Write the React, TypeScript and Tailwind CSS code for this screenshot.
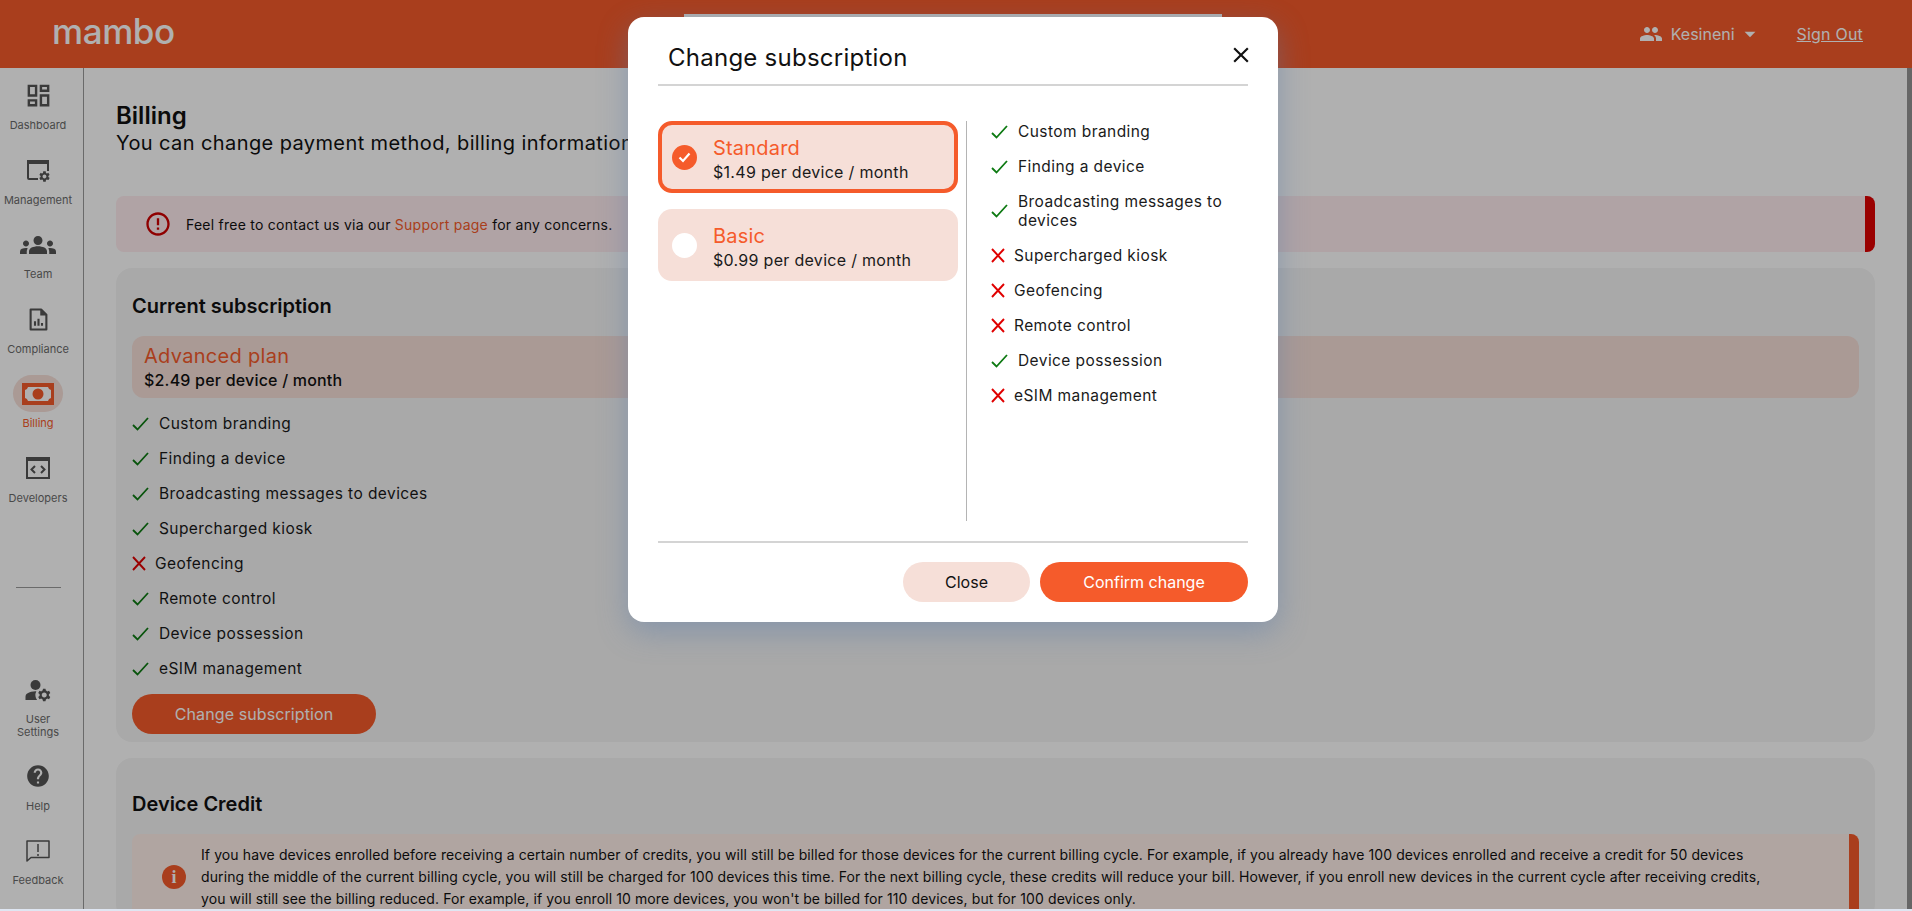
import { MdArrowDropDown, MdClose, MdErrorOutline, MdGroups, MdHelp, MdManageAccounts, MdOutlineDashboard, MdPeople } from "react-icons/md";
import type { ReactNode } from "react";

const font = "font-['Inter','Noto_Sans',sans-serif]";

function Check() {
  return (
    <svg width="17" height="14" viewBox="0 0 17 14" fill="none" className="shrink-0">
      <path d="M1 8l4.5 4.5L16 1" stroke="#0d7a12" strokeWidth="1.8" />
    </svg>
  );
}

function Cross() {
  return (
    <svg width="14" height="15" viewBox="0 0 14 15" fill="none" className="shrink-0">
      <path d="M1 1l12 13M13 1L1 14" stroke="#e00000" strokeWidth="1.9" />
    </svg>
  );
}

function Feature({ label, on, tall }: { label: string; on: boolean; tall?: boolean }) {
  return (
    <div className={`flex items-center ${tall ? "min-h-[54px] py-[8px]" : "h-[35px]"}`}>
      {on ? <Check /> : <Cross />}
      <span className={`text-[15.5px] leading-[19px] tracking-[0.42px] text-[#1a1a1a] ${on ? "ml-[10px]" : "ml-[9px]"}`}>{label}</span>
    </div>
  );
}

function ManagementIcon() {
  return (
    <svg width="24" height="24" viewBox="0 0 24 24" fill="#555">
      <path d="M1 2h22v11h-2V6H3v14h9v2H3a2 2 0 0 1-2-2z" />
      <path
        transform="translate(12 12) scale(.54)"
        d="M19.14 12.94c.04-.3.06-.61.06-.94 0-.32-.02-.64-.07-.94l2.03-1.58c.18-.14.23-.41.12-.61l-1.92-3.32c-.12-.22-.37-.29-.59-.22l-2.39.96c-.5-.38-1.03-.7-1.62-.94l-.36-2.54c-.04-.24-.24-.41-.48-.41h-3.84c-.24 0-.43.17-.47.41l-.36 2.54c-.59.24-1.13.57-1.62.94l-2.39-.96c-.22-.08-.47 0-.59.22L2.74 8.87c-.12.21-.08.47.12.61l2.03 1.58c-.05.3-.09.63-.09.94s.02.64.07.94l-2.03 1.58c-.18.14-.23.41-.12.61l1.92 3.32c.12.22.37.29.59.22l2.39-.96c.5.38 1.03.7 1.62.94l.36 2.54c.05.24.24.41.48.41h3.84c.24 0 .44-.17.47-.41l.36-2.54c.59-.24 1.13-.56 1.62-.94l2.39.96c.22.08.47 0 .59-.22l1.92-3.32c.12-.22.07-.47-.12-.61l-2.01-1.58zM12 15.6c-1.98 0-3.6-1.62-3.6-3.6s1.62-3.6 3.6-3.6 3.6 1.62 3.6 3.6-1.62 3.6-3.6 3.6z"
      />
    </svg>
  );
}

function ComplianceIcon() {
  return (
    <svg width="21" height="23" viewBox="0 0 24 26" fill="none">
      <path d="M3 1.500h12l6 6V24.500H3z" stroke="#555" strokeWidth="2.400" strokeLinejoin="round" />
      <path d="M14 1.500V8.500h7" fill="#555" />
      <path d="M8 20v-5M12 20v-8M16 20v-3" stroke="#555" strokeWidth="2.400" />
    </svg>
  );
}

function BillingIcon() {
  return (
    <svg width="32" height="22" viewBox="0 0 32 22">
      <rect width="32" height="22" fill="#f55b2b" />
      <path d="M6 4h20a4 4 0 0 0 3 3v8a4 4 0 0 0-3 3H6a4 4 0 0 0-3-3V7a4 4 0 0 0 3-3z" fill="#fff" />
      <circle cx="16" cy="11" r="5.500" fill="#f55b2b" />
    </svg>
  );
}

function DevelopersIcon() {
  return (
    <svg width="24" height="22" viewBox="0 0 24 22" fill="none">
      <rect x="1" y="1" width="22" height="20" stroke="#555" strokeWidth="2" />
      <rect x="1" y="1" width="22" height="3" fill="#555" />
      <path d="M9 9l-3.500 3.500L9 16M15 9l3.500 3.500L15 16" stroke="#555" strokeWidth="2" />
    </svg>
  );
}

function FeedbackIcon() {
  return (
    <svg width="24" height="22" viewBox="0 0 24 22" fill="none">
      <path d="M1 1h22v16.500H5L1 21z" stroke="#555" strokeWidth="1.500" strokeLinejoin="round" />
      <path d="M12 4v8M12 14v2" stroke="#555" strokeWidth="1.500" />
    </svg>
  );
}

function InfoIcon() {
  return (
    <div className="flex h-[24px] w-[24px] shrink-0 items-center justify-center rounded-full bg-[#f55b2b] font-['Liberation_Serif',serif] text-[18px] font-bold text-white">
      i
    </div>
  );
}

function NavItem({ icon, label, active }: { icon: ReactNode; label: ReactNode; active?: boolean }) {
  return (
    <div className="flex h-[74.6px] w-[76px] flex-col items-center">
      <div className={`flex h-[37px] w-[50px] items-center justify-center rounded-full ${active ? "bg-[#f6dfd8]" : ""}`}>{icon}</div>
      <span className={`mt-[5px] whitespace-nowrap text-center text-[11px] leading-[13px] ${active ? "text-[#f55b2b]" : "text-[#6b6b6b]"}`}>{label}</span>
    </div>
  );
}

const currentPlan: [string, boolean][] = [
  ["Custom branding", true],
  ["Finding a device", true],
  ["Broadcasting messages to devices", true],
  ["Supercharged kiosk", true],
  ["Geofencing", false],
  ["Remote control", true],
  ["Device possession", true],
  ["eSIM management", true],
];

const standardPlan: [string, boolean][] = [
  ["Custom branding", true],
  ["Finding a device", true],
  ["Broadcasting messages to devices", true],
  ["Supercharged kiosk", false],
  ["Geofencing", false],
  ["Remote control", false],
  ["Device possession", true],
  ["eSIM management", false],
];

export default function App() {
  return (
    <div className={`h-[911px] overflow-hidden bg-[#dfe6f2] ${font}`}>
      <div className="relative flex h-[909px] flex-col overflow-hidden bg-white">
        <header className="relative flex h-[68px] shrink-0 items-center bg-[#f55b2b] text-white">
          <div className="mb-[6px] ml-[52px] text-[35px] font-medium leading-none tracking-[-0.4px]">mambo</div>
          <div className="absolute left-[684px] top-[14px] h-[10px] w-[538px] bg-white" />
          <div className="ml-auto flex items-center pr-[49px] text-[16px]">
            <MdPeople size={24} />
            <span className="ml-[8px]">Kesineni</span>
            <MdArrowDropDown size={26} className="ml-[2px]" />
            <a className="ml-[34px] underline tracking-[0.2px]">Sign Out</a>
          </div>
        </header>

        <div className="flex min-h-0 flex-1">
          <aside className="flex w-[84px] shrink-0 flex-col border-r border-[#9a9a9a] pt-[9px]">
            <NavItem icon={<MdOutlineDashboard size={29} color="#555" />} label="Dashboard" />
            <NavItem icon={<ManagementIcon />} label="Management" />
            <NavItem icon={<MdGroups size={36} color="#555" />} label="Team" />
            <NavItem icon={<ComplianceIcon />} label="Compliance" />
            <NavItem active icon={<BillingIcon />} label="Billing" />
            <NavItem icon={<DevelopersIcon />} label="Developers" />
            <div className="ml-[16px] mt-[62px] w-[45px] border-t border-[#9a9a9a]" />
            <div className="mt-auto pb-[2px]">
              <div className="mb-[12px]">
                <NavItem icon={<MdManageAccounts size={30} color="#555" />} label={<>User<br />Settings</>} />
              </div>
              <NavItem icon={<MdHelp size={26} color="#555" />} label="Help" />
              <NavItem icon={<FeedbackIcon />} label="Feedback" />
            </div>
          </aside>

          <main className="min-w-0 flex-1 overflow-hidden px-[32px] pt-[34px] text-[#111]">
            <h1 className="mb-[1px] text-[24px] font-semibold leading-[28px]">Billing</h1>
            <p className="whitespace-nowrap text-[20px] leading-[24px] tracking-[0.4px]">You can change payment method, billing information</p>

            <div className="mt-[41px] flex h-[56px] items-center overflow-hidden rounded-[8px] bg-[#ffecef]">
              <MdErrorOutline size={28} color="#d00000" className="ml-[28px]" />
              <p className="ml-[14px] text-[14px] tracking-[0.25px]">
                Feel free to contact us via our <a className="text-[#f55b2b]">Support page</a> for any concerns.
              </p>
              <div className="ml-auto h-full w-[10px] bg-[#e00000]" />
            </div>

            <section className="mt-[16px] rounded-[16px] bg-[#f5f5f5] px-[16px] pb-[8px] pt-[26px]">
              <h2 className="text-[20px] font-semibold leading-[24px]">Current subscription</h2>
              <div className="mt-[18px] flex h-[62px] flex-col justify-center rounded-[12px] bg-[#f6dfd8] px-[12px]">
                <div className="text-[20px] leading-[26px] tracking-[0.3px] text-[#f55b2b]">Advanced plan</div>
                <div className="text-[16px] font-medium leading-[22px] tracking-[0.2px]">$2.49 per device / month</div>
              </div>
              <div className="pt-[8px]">
                {currentPlan.map(([label, on]) => (
                  <Feature key={label} label={label} on={on} />
                ))}
              </div>
              <button className="mt-[8px] h-[40px] w-[244px] rounded-full bg-[#f55b2b] text-[16px] tracking-[0.1px] text-white">Change subscription</button>
            </section>

            <section className="mt-[16px] rounded-[16px] bg-[#f5f5f5] px-[16px] pt-[34px]">
              <h2 className="text-[20px] font-semibold leading-[24px]">Device Credit</h2>
              <div className="mt-[18px] flex overflow-hidden rounded-[8px] bg-[#fff0ea]">
                <div className="flex items-center pl-[30px]">
                  <InfoIcon />
                </div>
                <p className="flex-1 whitespace-nowrap py-[10px] pl-[15px] text-[14px] leading-[22px] tracking-[0.1px]">
                  If you have devices enrolled before receiving a certain number of credits, you will still be billed for those devices for the current billing cycle. For example, if you already have 100 devices enrolled and receive a credit for 50 devices
                  <br />
                  during the middle of the current billing cycle, you will still be charged for 100 devices this time. For the next billing cycle, these credits will reduce your bill. However, if you enroll new devices in the current cycle after receiving credits,
                  <br />
                  you will still see the billing reduced. For example, if you enroll 10 more devices, you won't be billed for 110 devices, but for 100 devices only.
                </p>
                <div className="w-[10px] shrink-0 bg-[#f55b2b]" />
              </div>
            </section>
          </main>
          <div className="w-[5px] shrink-0 bg-[#949494]" />
        </div>

        <div className="absolute inset-0 flex items-start justify-center bg-black/[.31] pr-[6px] pt-[17px]">
          <div className="h-[605px] w-[650px] rounded-[16px] bg-white px-[30px] shadow-[0_10px_30px_rgba(90,125,170,0.45)]">
            <div className="flex h-[69px] items-start border-b-2 border-[#d4d4d4] pl-[10px]">
              <h2 className="mt-[25px] text-[24px] leading-[32px] tracking-[0.25px] text-[#111]">Change subscription</h2>
              <MdClose size={26} color="#111" className="ml-auto mr-[-6px] mt-[25px]" />
            </div>
            <div className="mt-[35px] flex h-[400px]">
              <div className="w-[300px] shrink-0">
                <PlanCard title="Standard" price="$1.49 per device / month" selected />
                <div className="mt-[16px]">
                  <PlanCard title="Basic" price="$0.99 per device / month" />
                </div>
              </div>
              <div className="ml-[8px] border-l border-[#b4b4b4] pl-[24px]">
                <div className="mt-[-7px]">
                  {standardPlan.map(([label, on]) => (
                    <Feature key={label} label={label} on={on} tall={label.length > 30} />
                  ))}
                </div>
              </div>
            </div>
            <div className="mt-[20px] flex justify-end gap-[10px] border-t-2 border-[#d4d4d4] pt-[19px]">
              <button className="h-[40px] w-[127px] rounded-full bg-[#f6dfd8] text-[16px] text-[#111]">Close</button>
              <button className="h-[40px] w-[208px] rounded-full bg-[#f55b2b] text-[16px] text-white">Confirm change</button>
            </div>
          </div>
        </div>
      </div>
    </div>
  );
}

function PlanCard({ title, price, selected }: { title: string; price: string; selected?: boolean }) {
  return (
    <div className={`flex h-[72px] items-center rounded-[14px] bg-[#f6dfd8] ${selected ? "border-[4px] border-[#f55b2b] pl-[10px]" : "pl-[14px]"}`}>
      {selected ? (
        <div className="flex h-[25px] w-[25px] shrink-0 items-center justify-center rounded-full bg-[#f55b2b]">
          <svg width="13" height="11" viewBox="0 0 13 11" fill="none">
            <path d="M1.500 5.500l3.500 3.500 6.500-7.500" stroke="#fff" strokeWidth="2.200" />
          </svg>
        </div>
      ) : (
        <div className="h-[25px] w-[25px] shrink-0 rounded-full bg-white" />
      )}
      <div className="ml-[16px] pt-[3px]">
        <div className="text-[20px] leading-[26px] tracking-[0.2px] text-[#f55b2b]">{title}</div>
        <div className="text-[16px] leading-[22px] tracking-[0.3px] text-[#1a1a1a]">{price}</div>
      </div>
    </div>
  );
}
